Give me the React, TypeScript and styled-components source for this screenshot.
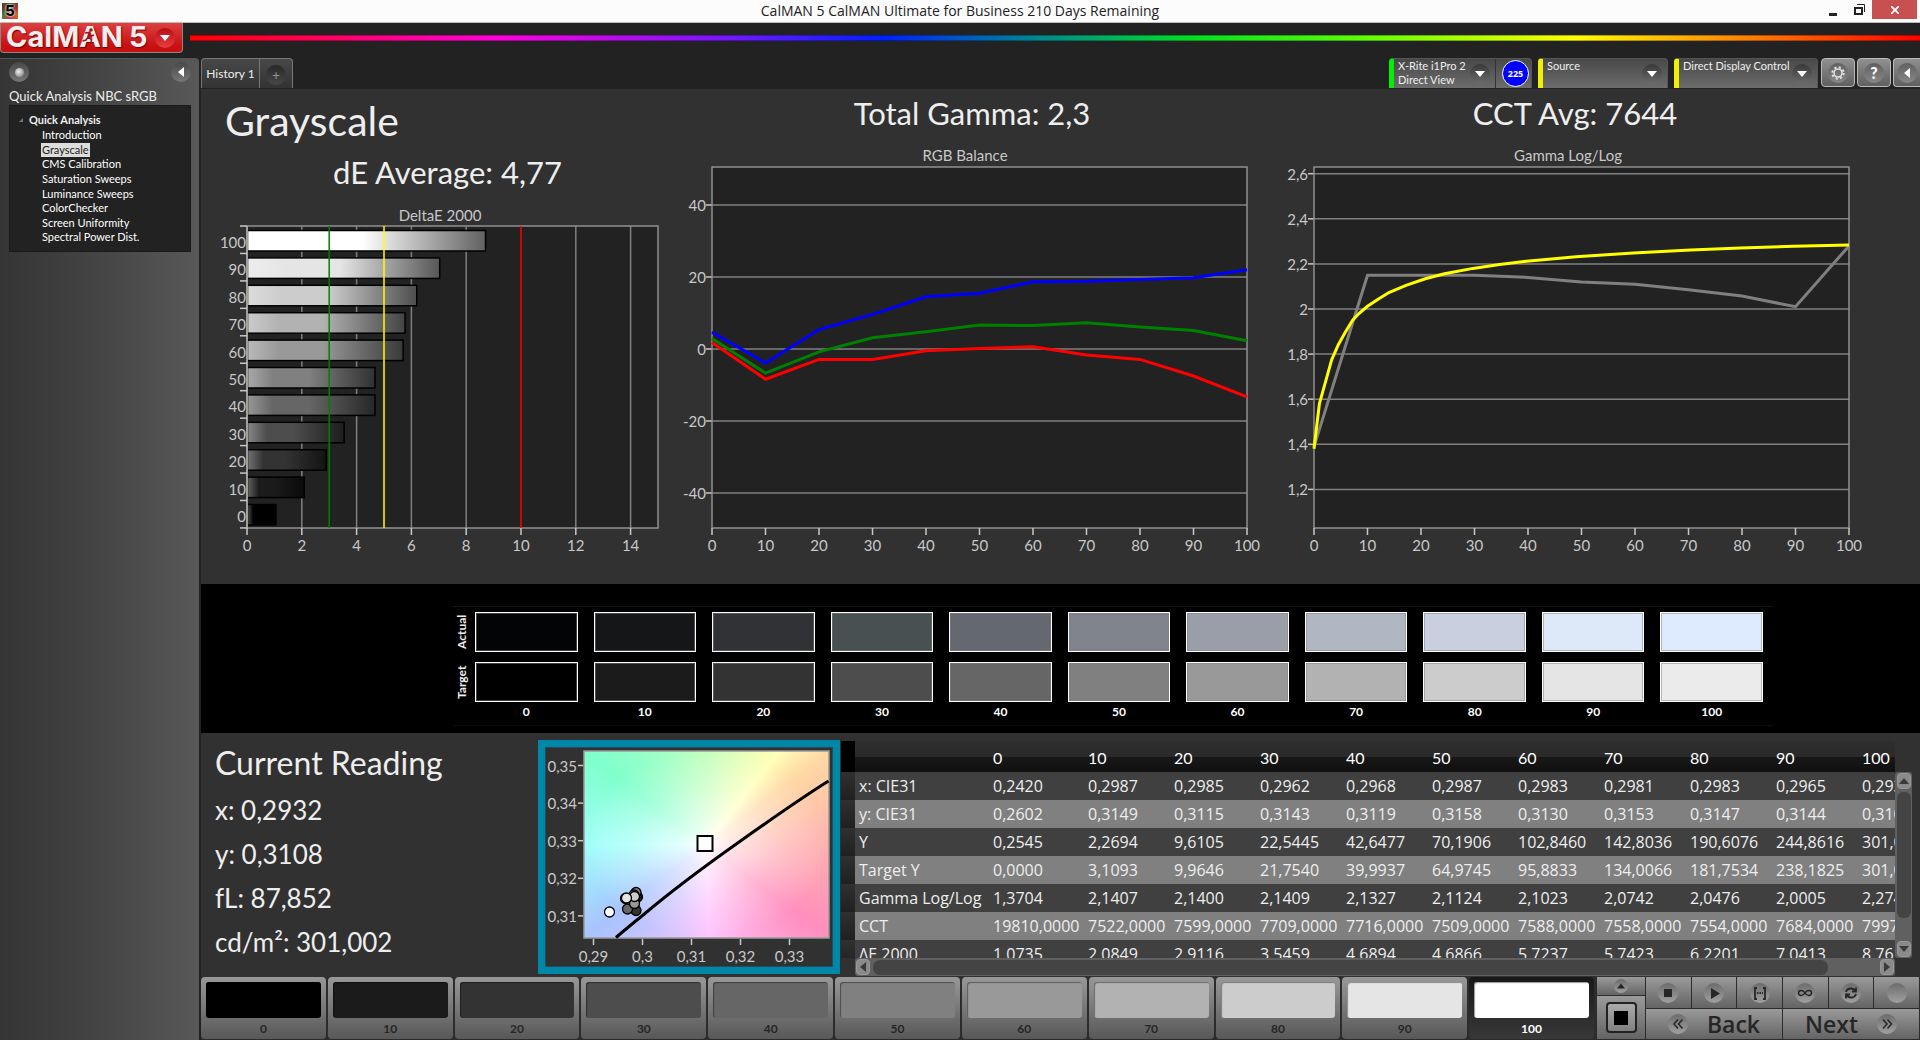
import React from "react";
import styled, { createGlobalStyle, css } from "styled-components";

const GlobalStyle = createGlobalStyle`
  *, *::before, *::after { box-sizing: border-box; }
  body { margin: 0; background: #222; font-family: Lato, "Open Sans", sans-serif; color: #eee; }
  button { font-family: inherit; color: inherit; border: 0; padding: 0; margin: 0; background: none; cursor: pointer; }
  h1, h2, h3, p, ul { margin: 0; padding: 0; font-weight: 400; }
  svg { display: block; }
`;

/* ---------- data ---------- */

const LEVELS = [0, 10, 20, 30, 40, 50, 60, 70, 80, 90, 100];
const ACTUAL = ["#020406", "#141618", "#313236", "#495052", "#646870", "#80848d", "#9a9ea9", "#b0b7c3", "#c9cfde", "#dde9f8", "#deebff"];
const TARGET = ["#000000", "#1b1b1b", "#333333", "#4d4d4d", "#666666", "#808080", "#999999", "#b2b2b2", "#cccccc", "#e5e5e5", "#ebebeb"];
const GRAYS = [0, 27, 51, 77, 102, 128, 153, 178, 204, 229, 255];
const DELTA_E = [1.04, 2.08, 2.88, 3.54, 4.67, 4.67, 5.7, 5.77, 6.2, 7.04, 8.72];

const RGB_SERIES = [
  { color: "#0000ff", values: [4.7, -3.9, 5.4, 9.6, 14.5, 15.5, 18.7, 18.8, 19.3, 19.8, 22] },
  { color: "#008000", values: [2.9, -6.7, -0.8, 3.1, 4.8, 6.7, 6.5, 7.3, 6.1, 5.1, 2.3] },
  { color: "#ff0000", values: [1.8, -8.4, -2.9, -2.9, -0.5, 0.1, 0.6, -1.7, -2.9, -7.5, -13.3] },
];
const GAMMA_MEASURED = [1.39, 2.15, 2.15, 2.15, 2.14, 2.12, 2.11, 2.085, 2.057, 2.01, 2.28];
const GAMMA_TARGET: [number, number][] = [
  [0, 1.38], [1, 1.58], [3.3, 1.775], [4.5, 1.84], [5.8, 1.895], [7.2, 1.95], [8.4, 1.98], [10, 2.012],
  [11.9, 2.042], [14, 2.073], [17.2, 2.105], [20.8, 2.134], [24.4, 2.156], [29.7, 2.18], [34.7, 2.198],
  [39.7, 2.212], [49, 2.232], [59.7, 2.248], [70.4, 2.262], [79.7, 2.27], [89.7, 2.278], [100, 2.284],
];

const TABLE: [string, string[]][] = [
  ["x: CIE31", ["0,2420", "0,2987", "0,2985", "0,2962", "0,2968", "0,2987", "0,2983", "0,2981", "0,2983", "0,2965", "0,2932"]],
  ["y: CIE31", ["0,2602", "0,3149", "0,3115", "0,3143", "0,3119", "0,3158", "0,3130", "0,3153", "0,3147", "0,3144", "0,3108"]],
  ["Y", ["0,2545", "2,2694", "9,6105", "22,5445", "42,6477", "70,1906", "102,8460", "142,8036", "190,6076", "244,8616", "301,0020"]],
  ["Target Y", ["0,0000", "3,1093", "9,9646", "21,7540", "39,9937", "64,9745", "95,8833", "134,0066", "181,7534", "238,1825", "301,0020"]],
  ["Gamma Log/Log", ["1,3704", "2,1407", "2,1400", "2,1409", "2,1327", "2,1124", "2,1023", "2,0742", "2,0476", "2,0005", "2,2740"]],
  ["CCT", ["19810,0000", "7522,0000", "7599,0000", "7709,0000", "7716,0000", "7509,0000", "7588,0000", "7558,0000", "7554,0000", "7684,0000", "7997,0000"]],
  ["ΔE 2000", ["1,0735", "2,0849", "2,9116", "3,5459", "4,6894", "4,6866", "5,7237", "5,7423", "6,2201", "7,0413", "8,7615"]],
];

/* ---------- window frame ---------- */

const Window = styled.div`
  display: flex;
  flex-direction: column;
  min-height: 100vh;
  overflow: hidden;
`;

const TitleBar = styled.header`
  display: grid;
  grid-template-columns: 1fr auto 1fr;
  align-items: center;
  height: 23px;
  background: #fcfcfc;
  border-bottom: 1px solid #bbb;
  color: #222;
  font: 14px/20px "Open Sans", sans-serif;
`;

const AppIcon = styled.span`
  width: 16px;
  height: 16px;
  margin-left: 2px;
  background: conic-gradient(#2c6a2c, #a03030, #d06a20, #d8304a, #40803a, #703028, #2c6a2c);
  color: #000;
  font: 800 15px/16px Inter, sans-serif;
  text-align: center;
  text-shadow: 0 0 2px #fff, 0 0 2px #fff;
`;

const WindowButtons = styled.div`
  display: flex;
  justify-self: end;
  align-self: start;
  margin-right: 3px;
`;

const WindowButton = styled.button<{ $close?: boolean }>`
  display: grid;
  place-items: center;
  width: ${(p) => (p.$close ? 45 : 26)}px;
  height: 19px;
  background: ${(p) => (p.$close ? "#c75050" : "none")};
`;

const BrandBar = styled.div`
  display: flex;
  align-items: flex-start;
  gap: 7px;
  height: 35px;
  background: #222;
`;

const Logo = styled.button`
  position: relative;
  display: flex;
  align-items: center;
  gap: 6px;
  width: 183px;
  height: 30px;
  padding: 0 7px 2px 5px;
  background: linear-gradient(#dd4040, #c81010 80%);
  border: 1px solid #888;
  border-top: 0;
  border-radius: 0 0 4px 4px;
  color: #eee;
  font: 700 29px/28px Inter, sans-serif;
  text-shadow: 1px 1px 1px #700;
`;

const LogoArrow = styled.span`
  display: grid;
  place-items: center;
  width: 20px;
  height: 20px;
  margin: 2px 0 0 auto;
  border-radius: 50%;
  background: linear-gradient(#b80c18, #e84040);
`;

const Runner = styled.svg`
  position: absolute;
  left: 81px;
  top: 5px;
`;

const Spectrum = styled.div`
  flex: 1;
  height: 6px;
  margin-top: 12px;
  border: 1px solid rgba(0, 0, 0, 0.3);
  border-width: 1px 0;
  background: linear-gradient(90deg, #f00, #f0d 18%, #6a18ff 32%, #0020ff 40%, #008890 49%, #00e020 58%, #60ff00 68%, #ff0 80%, #f00);
`;

const Body = styled.div`
  display: grid;
  grid-template-columns: 199px minmax(0, 1fr);
  column-gap: 2px;
  flex: 1;
`;

/* ---------- sidebar ---------- */

const Sidebar = styled.aside`
  padding: 3px 8px 0 9px;
  border-radius: 0 4px 0 0;
  background: linear-gradient(90deg, #353535, #414141 40%, #585858);
  border-top: 1px solid #555;
`;

const SidebarTop = styled.div`
  display: flex;
  justify-content: space-between;
`;

const RoundButton = styled.button`
  display: grid;
  place-items: center;
  width: 20px;
  height: 20px;
  border-radius: 50%;
  background: linear-gradient(#484848, #777);
`;

const Pearl = styled.span`
  width: 9px;
  height: 9px;
  border-radius: 50%;
  background: radial-gradient(circle at 40% 40%, #eee, #888 80%);
`;

const SidebarTitle = styled.h2`
  margin: 5px 0 0;
  font-size: 13px;
  line-height: 18px;
  white-space: nowrap;
`;

const Tree = styled.nav`
  height: 147px;
  padding: 6px 0 0 9px;
  background: #222;
  border: 1px solid #1a1a1a;
`;

const TreeRoot = styled.div`
  display: flex;
  align-items: center;
  gap: 6px;
  height: 15px;
  font-weight: 700;
  font-size: 11px;
`;

const TreeList = styled.ul`
  display: grid;
  grid-template-rows: repeat(8, minmax(0, 1fr));
  height: 117px;
  padding-left: 22px;
  margin-top: 1px;
  list-style: none;
  font-size: 11px;
  line-height: 14px;
`;

const TreeLink = styled.a<{ $on: boolean }>`
  display: block;
  width: fit-content;
  padding: 0 1px;
  color: ${(p) => (p.$on ? "#222" : "#fff")};
  background: ${(p) => (p.$on ? "#ddd" : "none")};
  text-decoration: none;
`;

/* ---------- tabs and device bar ---------- */

const Main = styled.main`
  display: flex;
  flex-direction: column;
  min-width: 0;
`;

const TopRow = styled.div`
  display: flex;
  justify-content: space-between;
  height: 31px;
  background: #222;
`;

const Tabs = styled.div`
  display: flex;
  height: 30px;
  border: 1px solid #777;
  border-bottom: 0;
  border-radius: 4px 4px 0 0;
  background: linear-gradient(#484848, #333);
`;

const Tab = styled.button`
  display: grid;
  place-items: center;
  width: 57px;
  font-size: 12px;
  line-height: 28px;
  white-space: nowrap;
`;

const AddTab = styled.button`
  display: grid;
  place-items: center;
  width: 33px;
  border-left: 1px solid #777;
`;

const AddDot = styled.span`
  width: 20px;
  height: 20px;
  border-radius: 50%;
  background: linear-gradient(#282828, #484848);
  color: #999;
  font-size: 13px;
  line-height: 20px;
  margin-top: 3px;
`;

const Devices = styled.div`
  display: flex;
  gap: 6px;
`;

const Device = styled.div<{ $w: number; $c: string }>`
  display: flex;
  align-items: stretch;
  width: ${(p) => p.$w}px;
  height: 30px;
  border: 1px solid #555;
  border-bottom: 0;
  border-left: 5px solid ${(p) => p.$c};
  border-radius: 4px 4px 0 0;
  background: linear-gradient(#484848, #6c6c6c);
`;

const DeviceButton = styled.button`
  flex: 1;
  display: flex;
  justify-content: space-between;
  padding: 0 5px 0 4px;
  text-align: left;
  font-size: 11px;
  line-height: 14px;
  white-space: nowrap;
`;

const ArrowDot = styled.span`
  display: grid;
  place-items: center;
  width: 20px;
  height: 20px;
  margin-top: 5px;
  border-radius: 50%;
  background: linear-gradient(#383838, #6c6c6c);
`;

const BadgeCell = styled.span`
  display: grid;
  place-items: center;
  width: 36px;
  padding: 0 0 1px 4px;
  border-left: 1px solid #333;
`;

const Badge = styled.span`
  width: 27px;
  height: 27px;
  border: 1px solid #fff;
  border-radius: 50%;
  background: #00f;
  color: #fff;
  font: 700 9px/25px "Open Sans", sans-serif;
  text-align: center;
`;

const ToolButtons = styled.div`
  display: flex;
  gap: 2px;
  margin-left: -3px;
`;

const ToolButton = styled.button<{ $edge?: boolean }>`
  display: grid;
  place-items: center;
  width: ${(p) => (p.$edge ? 27 : 34)}px;
  height: 29px;
  border: 1px solid #bbb;
  border-right-width: ${(p) => (p.$edge ? 0 : 1)}px;
  border-radius: ${(p) => (p.$edge ? "4px 0 0 4px" : "4px")};
  background: linear-gradient(#909090, #606060);
`;

const ToolDot = styled.span`
  display: grid;
  place-items: center;
  width: 20px;
  height: 20px;
  border-radius: 50%;
  background: linear-gradient(#606060, #888);
  color: #fff;
  font-weight: 900;
  font-size: 16px;
  line-height: 20px;
`;

/* ---------- charts ---------- */

const Charts = styled.section`
  display: grid;
  grid-template-columns: 469fr 600fr 650fr;
  padding: 4px 0 20px;
  background: #313131;
`;

const Panel = styled.div`
  display: flex;
  flex-direction: column;
  min-width: 0;
`;

const PageTitle = styled.h1`
  padding-left: 24px;
  margin-bottom: 3px;
  font-size: 41px;
  line-height: 56px;
`;

const Stat = styled.h2<{ $left?: number; $right?: number }>`
  padding: 0 ${(p) => p.$right ?? 0}px 0 ${(p) => p.$left ?? 0}px;
  margin-bottom: 7px;
  font-size: 31px;
  line-height: 40px;
  text-align: center;
`;

const ChartSvg = styled.svg`
  width: 100%;
  height: auto;
  margin-top: auto;
  font-family: Lato, sans-serif;
  font-size: 15px;
  fill: #c8c8c8;
`;

const points = (list: [number, number][]) => list.map((p) => p.map((n) => n.toFixed(1)).join(",")).join(" ");

const barShade = (v: number, k: number) => {
  const n = Math.round(k > 0 ? v + (255 - v) * k : v * (1 + k));
  return `rgb(${n},${n},${n})`;
};

function DeltaChart() {
  const x = (v: number) => 46 + v * 27.4;
  return (
    <ChartSvg viewBox="0 0 469 364" role="img" aria-label="DeltaE 2000">
      <defs>
        {GRAYS.map((g, i) => (
          <linearGradient key={i} id={`bar${i}`}>
            <stop offset="0" stopColor={barShade(g, 0.32)} />
            <stop offset="0.2" stopColor={barShade(g, 0)} />
            <stop offset="0.48" stopColor={barShade(g, 0)} />
            <stop offset="1" stopColor={barShade(g, -0.62)} />
          </linearGradient>
        ))}
      </defs>
      <text x="239" y="21" textAnchor="middle">DeltaE 2000</text>
      <rect x="46" y="26" width="411" height="302" fill="#222" />
      {[2, 4, 6, 8, 12, 14].map((v) => (
        <path key={v} d={`M${x(v)} 26V328`} stroke="#808080" strokeWidth="1.5" />
      ))}
      <rect x="46" y="26" width="411" height="302" fill="none" stroke="#909090" strokeWidth="1.5" />
      {DELTA_E.map((v, i) => (
        <rect key={i} x="46.5" y={30.5 + (10 - i) * 27.4} width={v * 27.3} height="20.5" fill={`url(#bar${i})`} stroke="#000" strokeWidth="1.5" />
      ))}
      <path d="M46 26V328" stroke="#a0a0a0" strokeWidth="2" />
      <path d={`M${x(3)} 26V328`} stroke="#008000" strokeWidth="1.5" />
      <path d={`M${x(5)} 26V328`} stroke="#ff0" strokeWidth="1.5" />
      <path d={`M${x(10)} 26V328`} stroke="#f00" strokeWidth="1.5" />
      {Array.from({ length: 12 }, (_, i) => (
        <path key={i} d={`M39 ${26 + i * 27.45}H46`} stroke="#c8c8c8" strokeWidth="1.5" />
      ))}
      {LEVELS.map((v, i) => (
        <text key={v} x="45" y={48 + (10 - i) * 27.4} textAnchor="end">{v}</text>
      ))}
      {[0, 2, 4, 6, 8, 10, 12, 14].map((v) => (
        <React.Fragment key={v}>
          <path d={`M${x(v)} 328V335`} stroke="#c8c8c8" strokeWidth="1.5" />
          <text x={x(v)} y="351" textAnchor="middle">{v}</text>
        </React.Fragment>
      ))}
    </ChartSvg>
  );
}

type LineChartProps = {
  title: string;
  width: number;
  left: number;
  titleX: number;
  ticks: number[];
  yOf: (v: number) => number;
  children: (x: (v: number) => number) => React.ReactNode;
};

function LineChart({ title, width, left, titleX, ticks, yOf, children }: LineChartProps) {
  const x = (v: number) => left + v * 5.35;
  return (
    <ChartSvg viewBox={`0 0 ${width} 424`} role="img" aria-label={title}>
      <text x={titleX} y="21" textAnchor="middle">{title}</text>
      <rect x={left} y="27" width="535" height="361" fill="#222" />
      {ticks.map((t) => (
        <React.Fragment key={t}>
          <path d={`M${left} ${yOf(t)}H${left + 535}`} stroke="#808080" strokeWidth="1.5" />
          <path d={`M${left - 6} ${yOf(t)}H${left}`} stroke="#c8c8c8" strokeWidth="1.5" />
          <text x={left - 6} y={yOf(t) + 6} textAnchor="end">{String(t).replace(".", ",")}</text>
        </React.Fragment>
      ))}
      <rect x={left} y="27" width="535" height="361" fill="none" stroke="#909090" strokeWidth="1.5" />
      {LEVELS.map((v) => (
        <React.Fragment key={v}>
          <path d={`M${x(v)} 388V395`} stroke="#c8c8c8" strokeWidth="1.5" />
          <text x={x(v)} y="411" textAnchor="middle">{v}</text>
        </React.Fragment>
      ))}
      {children(x)}
    </ChartSvg>
  );
}

const balanceY = (v: number) => 209 - v * 3.6;
const gammaY = (v: number) => 169 - (v - 2) * 225.5;

/* ---------- swatches ---------- */

const SwatchBand = styled.section`
  background: #000;
  padding: 22px 147px 7px 252px;
`;

const SwatchGrid = styled.div`
  display: grid;
  grid-template-columns: 6px repeat(11, 1fr);
  column-gap: 16px;
  row-gap: 10px;
  height: 120px;
  padding: 5px 10px 0 0;
  grid-template-rows: 40px 40px 14px;
  border-top: 1px solid #161616;
  border-bottom: 1px solid #0c0c0c;
`;

const SwatchLabel = styled.span`
  justify-self: start;
  writing-mode: vertical-rl;
  rotate: 180deg;
  width: 18px;
  font-size: 12px;
  line-height: 18px;
  text-align: center;
  font-weight: 700;
`;

const Swatch = styled.span`
  border: 1px solid #fff;
  box-shadow: inset 0 0 0 1px rgba(128, 128, 128, 0.5);
`;

const SwatchValue = styled.span`
  margin-top: -7px;
  font-size: 12px;
  line-height: 14px;
  font-weight: 700;
  color: #fff;
  text-align: center;
`;

/* ---------- readings ---------- */

const Lower = styled.section`
  display: grid;
  grid-template-columns: 337px 302px minmax(0, 1fr);
  flex: 1;
  padding: 7px 8px 0 0;
  background: #313131;
`;

const Reading = styled.div`
  padding-left: 14px;
`;

const ReadingTitle = styled.h2`
  margin-bottom: 2px;
  font-size: 32px;
  line-height: 46px;
`;

const ReadingLine = styled.p`
  font-size: 26px;
  line-height: 44px;
`;

const CieFrame = styled.div`
  height: 234px;
  border: 7px solid #0087a8;
  box-shadow: inset 0 0 0 1px #205060;
`;

const CieSvg = styled.svg`
  font-family: Lato, sans-serif;
  font-size: 15px;
  fill: #c8c8c8;
`;

const CieField = styled.div`
  width: 100%;
  height: 100%;
  background:
    radial-gradient(closest-side, #fff, rgba(255, 255, 255, 0.7) 20%, rgba(255, 255, 255, 0.3) 60%, rgba(255, 255, 255, 0)),
    conic-gradient(#c4ffc0, #ffffb8 38deg, #ffd8a4 53deg, #ffb0ae 90deg, #ff8fbe 127deg, #ffc4ff 178deg, #a8c4ff 233deg, #a0fffa 270deg, #80ffcc 307deg, #c4ffc0);
`;

function CieChart() {
  const px = (v: number) => 48.5 + (v - 0.29) * 4900;
  const py = (v: number) => 18.5 + (0.35 - v) * 3760;
  return (
    <CieSvg width="288" height="220" viewBox="0 0 288 220" role="img" aria-label="CIE xy chart">
      <foreignObject x="39" y="4" width="245" height="187"><CieField /></foreignObject>
      <rect x="39" y="4" width="245" height="187" fill="none" stroke="#999" strokeWidth="1.5" />
      <path d="M71 190.5Q82 181 97.5 168.5C130 141 160 119 195.5 94C225 73 255 52 283.5 34" fill="none" stroke="#000" strokeWidth="3" />
      {[0.35, 0.34, 0.33, 0.32, 0.31].map((v) => (
        <React.Fragment key={v}>
          <path d={`M33 ${py(v)}H38`} stroke="#c8c8c8" strokeWidth="1.5" />
          <text x="32" y={py(v) + 6} textAnchor="end">{String(v).replace(".", ",")}</text>
        </React.Fragment>
      ))}
      {[0.29, 0.3, 0.31, 0.32, 0.33].map((v) => (
        <React.Fragment key={v}>
          <path d={`M${px(v)} 192V198`} stroke="#c8c8c8" strokeWidth="1.5" />
          <text x={px(v)} y="215" textAnchor="middle">{String(v).replace(".", ",")}</text>
        </React.Fragment>
      ))}
      <rect x="152.5" y="89" width="15" height="15" fill="#fff" stroke="#000" strokeWidth="2" />
      <g stroke="#000" strokeWidth="1.3">
        <circle cx="92.5" cy="150" r="5" fill="#1b1b1b" />
        <circle cx="91" cy="163.5" r="5" fill="#333" />
        <circle cx="80.5" cy="151.5" r="5" fill="#4d4d4d" />
        <circle cx="82.5" cy="162" r="5" fill="#666" />
        <circle cx="91" cy="145.5" r="5" fill="#808080" />
        <circle cx="89.5" cy="156.5" r="5" fill="#999" />
        <circle cx="89" cy="148" r="5" fill="#b2b2b2" />
        <circle cx="89.5" cy="149.5" r="5" fill="#ccc" />
        <circle cx="81.5" cy="151" r="5" fill="#e5e5e5" />
        <circle cx="64.5" cy="165" r="5" fill="#fff" />
      </g>
    </CieSvg>
  );
}

const DataGrid = styled.div`
  display: grid;
  grid-template-columns: minmax(0, 1fr) 17px;
  grid-template-rows: 217px 18px;
  height: 235px;
  margin-top: 1px;
  padding-left: 1px;
`;

const TableClip = styled.div`
  overflow: hidden;
`;

const Table = styled.table`
  table-layout: fixed;
  width: 1103px;
  border-collapse: collapse;
  font: 16px/28px "Open Sans", sans-serif;
  text-align: left;

  th, td { padding: 0 0 0 4px; font-weight: 400; white-space: nowrap; height: 28px; }
  thead th { height: 31px; font: 400 16px/29px Lato, sans-serif; color: #fff; padding-top: 2px; }
  thead tr { background: linear-gradient(#2e2e2e, #2a2a2a 50%, #181818 50%, #101010); }
  tbody tr { background: #404040; }
  tbody tr:nth-child(even) { background: #808080; }
  tbody td:first-child { background: linear-gradient(#303030, #202020); }
  thead td { background: #000; }
`;

const scrollBase = css`
  display: flex;
  align-items: center;
  background: #606060;
`;

const VScroll = styled.div`
  ${scrollBase}
  flex-direction: column;
  margin-top: 31px;
  padding: 1px;
  border-radius: 3px;
`;

const HScroll = styled.div`
  ${scrollBase}
  margin-left: 14px;
  padding: 1px;
  border-radius: 3px;
`;

const ScrollButton = styled.button`
  display: grid;
  place-items: center;
  width: 14px;
  height: 16px;
  border-radius: 4px;
  background: #8a8a8a;
  border: 1px solid #999;
`;

const VThumb = styled.span`
  width: 14px;
  height: 126px;
  margin: 3px 0 auto;
  border-radius: 6px;
  background: #444;
`;

const HThumb = styled.span`
  flex: 0 1 92%;
  height: 15px;
  margin: 0 auto 0 3px;
  border-radius: 7px;
  background: #444;
`;

/* ---------- footer ---------- */

const Footer = styled.footer`
  display: grid;
  grid-template-columns: minmax(0, 1fr) 48px 273px;
  column-gap: 1px;
  height: 63px;
  padding: 0 1px 1px 0;
  background: #2c2c2c;
`;

const Patches = styled.div`
  display: flex;
  gap: 2px;
  padding-right: 2px;
`;

const Patch = styled.button<{ $on: boolean }>`
  flex: 1;
  display: flex;
  flex-direction: column;
  padding: 5px 5px 0;
  border-radius: 4px;
  background: ${(p) => (p.$on ? "linear-gradient(#181818, #383838)" : "linear-gradient(#989898, #585858)")};
  color: ${(p) => (p.$on ? "#fff" : "#262626")};
  font-size: 12px;
  font-weight: 700;
  line-height: 21px;
`;

const PatchColor = styled.span`
  align-self: stretch;
  height: 36px;
  border-radius: 3px;
  box-shadow: inset 1px 1px 1px rgba(0, 0, 0, 0.4);
`;

const PatchLabel = styled.span`
  align-self: stretch;
  text-align: center;
`;

const StopColumn = styled.div`
  display: grid;
  grid-template-rows: 18px 43px;
  row-gap: 1px;
`;

const MetalButton = styled.button`
  display: flex;
  align-items: center;
  justify-content: center;
  gap: 19px;
  background: linear-gradient(#9a9a9a, #646464);
  color: #262626;
  font: 600 23px/28px "Open Sans", sans-serif;
`;

const StopBox = styled.span`
  display: grid;
  place-items: center;
  width: 31px;
  height: 31px;
  border: 2px solid #222;
  border-radius: 4px;
  background: linear-gradient(#aaa, #808080);
`;

const StopCore = styled.span`
  width: 14px;
  height: 14px;
  background: #000;
`;

const Transport = styled.div`
  display: grid;
  grid-template-columns: repeat(12, 1fr);
  grid-template-rows: 31px 30px;
  gap: 1px;

  button { grid-column: span 2; }
  button:nth-last-child(-n + 2) { grid-column: span 6; }
`;

const MetalDot = styled.span<{ $small?: boolean }>`
  display: grid;
  place-items: center;
  width: ${(p) => (p.$small ? 14 : 20)}px;
  height: ${(p) => (p.$small ? 14 : 20)}px;
  border-radius: 50%;
  background: linear-gradient(#6c6c6c, #a0a0a0);
`;

type TriProps = { dir: "up" | "down" | "left" | "right"; size?: number; color?: string };
const TRI = { up: "M0 8L5 2L10 8Z", down: "M0 2H10L5 8Z", left: "M8 0V10L2 5Z", right: "M2 0V10L8 5Z" };
const Tri = ({ dir, size = 10, color = "#fff" }: TriProps) => (
  <svg width={size} height={size} viewBox="0 0 10 10" aria-hidden="true"><path d={TRI[dir]} fill={color} /></svg>
);

const Glyph = ({ children }: { children: React.ReactNode }) => (
  <svg width="16" height="16" viewBox="0 0 16 16" fill="none" stroke="#262626" strokeWidth="1.8" aria-hidden="true">{children}</svg>
);

const MENU = ["Introduction", "Grayscale", "CMS Calibration", "Saturation Sweeps", "Luminance Sweeps", "ColorChecker", "Screen Uniformity", "Spectral Power Dist."];

export default function App() {
  const [page, setPage] = React.useState("Grayscale");
  const [level, setLevel] = React.useState(100);

  return (
    <Window>
      <GlobalStyle />
      <TitleBar>
        <AppIcon>5</AppIcon>
        <span>CalMAN 5 CalMAN Ultimate for Business 210 Days Remaining</span>
        <WindowButtons>
          <WindowButton aria-label="Minimize">
            <svg width="8" height="14"><path d="M0 10H8V13H0Z" fill="#222" /></svg>
          </WindowButton>
          <WindowButton aria-label="Restore">
            <svg width="11" height="11" fill="none" stroke="#222"><path d="M1 4H8V10H1Z" strokeWidth="2" /><path d="M3 .5H10.5V8" /></svg>
          </WindowButton>
          <WindowButton $close aria-label="Close">
            <svg width="8" height="8" stroke="#fff" strokeWidth="1.8"><path d="M0 0L8 8M8 0L0 8" /></svg>
          </WindowButton>
        </WindowButtons>
      </TitleBar>

      <BrandBar>
        <Logo aria-label="CalMAN 5 menu">
          <span>CalMAN</span>
          <span>5</span>
          <Runner width="14" height="17" viewBox="0 0 14 17" fill="none" stroke="#a01818" strokeWidth="1.6" aria-hidden="true">
            <circle cx="9" cy="2" r="1" fill="#a01818" />
            <path d="M3 5L7 4.5L6 9L9.5 11.5L9 15M6 9L4 12L0.5 13M7 5L9.5 8L12 7" />
          </Runner>
          <LogoArrow><Tri dir="down" /></LogoArrow>
        </Logo>
        <Spectrum />
      </BrandBar>

      <Body>
        <Sidebar>
          <SidebarTop>
            <RoundButton aria-label="Pin"><Pearl /></RoundButton>
            <RoundButton aria-label="Collapse"><Tri dir="left" /></RoundButton>
          </SidebarTop>
          <SidebarTitle>Quick Analysis NBC sRGB</SidebarTitle>
          <Tree aria-label="Workflow">
            <TreeRoot>
              <svg width="4" height="4" aria-hidden="true"><path d="M4 0V4H0Z" fill="#777" /></svg>
              Quick Analysis
            </TreeRoot>
            <TreeList>
              {MENU.map((m) => (
                <li key={m}>
                  <TreeLink href="#" $on={m === page} onClick={() => setPage(m)}>{m}</TreeLink>
                </li>
              ))}
            </TreeList>
          </Tree>
        </Sidebar>

        <Main>
          <TopRow>
            <Tabs>
              <Tab>History 1</Tab>
              <AddTab aria-label="Add tab"><AddDot>+</AddDot></AddTab>
            </Tabs>
            <Devices>
              <Device $w={143} $c="#00f000">
                <DeviceButton aria-haspopup="menu">
                  <span>X-Rite i1Pro 2<br />Direct View</span>
                  <ArrowDot><Tri dir="down" /></ArrowDot>
                </DeviceButton>
                <BadgeCell><Badge>225</Badge></BadgeCell>
              </Device>
              <Device $w={130} $c="#f0f000">
                <DeviceButton aria-haspopup="menu"><span>Source</span><ArrowDot><Tri dir="down" /></ArrowDot></DeviceButton>
              </Device>
              <Device $w={144} $c="#f0f000">
                <DeviceButton aria-haspopup="menu"><span>Direct Display Control</span><ArrowDot><Tri dir="down" /></ArrowDot></DeviceButton>
              </Device>
              <ToolButtons>
                <ToolButton aria-label="Settings">
                  <ToolDot>
                    <svg width="14" height="14" viewBox="0 0 14 14" fill="none" stroke="#e0e0e0" aria-hidden="true">
                      <circle cx="7" cy="7" r="4" strokeWidth="1.6" />
                      <circle cx="7" cy="7" r="5.7" strokeWidth="2" strokeDasharray="2.2 2.28" />
                    </svg>
                  </ToolDot>
                </ToolButton>
                <ToolButton aria-label="Help"><ToolDot>?</ToolDot></ToolButton>
                <ToolButton $edge aria-label="Collapse panel"><ToolDot><Tri dir="left" /></ToolDot></ToolButton>
              </ToolButtons>
            </Devices>
          </TopRow>

          <Charts>
            <Panel>
              <PageTitle>Grayscale</PageTitle>
              <Stat $left={24}>dE Average: 4,77</Stat>
              <DeltaChart />
            </Panel>
            <Panel>
              <Stat $left={4}>Total Gamma: 2,3</Stat>
              <LineChart title="RGB Balance" width={600} left={42} titleX={295} ticks={[40, 20, 0, -20, -40]} yOf={balanceY}>
                {(x) => RGB_SERIES.map((s) => (
                  <polyline key={s.color} points={points(s.values.map((v, i) => [x(i * 10), balanceY(v)]))} fill="none" stroke={s.color} strokeWidth="3" />
                ))}
              </LineChart>
            </Panel>
            <Panel>
              <Stat $right={40}>CCT Avg: 7644</Stat>
              <LineChart title="Gamma Log/Log" width={650} left={44} titleX={298} ticks={[2.6, 2.4, 2.2, 2, 1.8, 1.6, 1.4, 1.2]} yOf={gammaY}>
                {(x) => (
                  <>
                    <polyline points={points(GAMMA_MEASURED.map((v, i) => [x(i * 10), gammaY(v)]))} fill="none" stroke="#808080" strokeWidth="3" />
                    <polyline points={points(GAMMA_TARGET.map(([a, b]) => [x(a), gammaY(b)]))} fill="none" stroke="#ff0" strokeWidth="3" />
                  </>
                )}
              </LineChart>
            </Panel>
          </Charts>

          <SwatchBand>
            <SwatchGrid>
              <SwatchLabel>Actual</SwatchLabel>
              {ACTUAL.map((c, i) => <Swatch key={i} style={{ background: c }} />)}
              <SwatchLabel>Target</SwatchLabel>
              {TARGET.map((c, i) => <Swatch key={i} style={{ background: c }} />)}
              <span />
              {LEVELS.map((l) => <SwatchValue key={l}>{l}</SwatchValue>)}
            </SwatchGrid>
          </SwatchBand>

          <Lower>
            <Reading>
              <ReadingTitle>Current Reading</ReadingTitle>
              <ReadingLine>x: 0,2932</ReadingLine>
              <ReadingLine>y: 0,3108</ReadingLine>
              <ReadingLine>fL: 87,852</ReadingLine>
              <ReadingLine>cd/m²: 301,002</ReadingLine>
            </Reading>
            <CieFrame><CieChart /></CieFrame>
            <DataGrid>
              <TableClip>
                <Table>
                  <colgroup>
                    <col width={14} /><col width={134} /><col width={95} />
                    {LEVELS.slice(1).map((l) => <col key={l} width={86} />)}
                  </colgroup>
                  <thead>
                    <tr><td /><th />{LEVELS.map((l) => <th key={l} scope="col">{l}</th>)}</tr>
                  </thead>
                  <tbody>
                    {TABLE.map(([name, cells]) => (
                      <tr key={name}>
                        <td />
                        <th scope="row">{name}</th>
                        {cells.map((c, i) => <td key={i}>{c}</td>)}
                      </tr>
                    ))}
                  </tbody>
                </Table>
              </TableClip>
              <VScroll>
                <ScrollButton aria-label="Scroll up"><Tri dir="up" color="#3a3a3a" /></ScrollButton>
                <VThumb />
                <ScrollButton aria-label="Scroll down"><Tri dir="down" color="#3a3a3a" /></ScrollButton>
              </VScroll>
              <HScroll>
                <ScrollButton aria-label="Scroll left"><Tri dir="left" color="#3a3a3a" /></ScrollButton>
                <HThumb />
                <ScrollButton aria-label="Scroll right"><Tri dir="right" color="#3a3a3a" /></ScrollButton>
              </HScroll>
            </DataGrid>
          </Lower>

          <Footer>
            <Patches>
              {LEVELS.map((l, i) => (
                <Patch key={l} $on={l === level} onClick={() => setLevel(l)}>
                  <PatchColor style={{ background: i === 10 ? "#fff" : TARGET[i] }} />
                  <PatchLabel>{l}</PatchLabel>
                </Patch>
              ))}
            </Patches>
            <StopColumn>
              <MetalButton aria-label="Expand"><MetalDot $small><Tri dir="up" size={8} color="#262626" /></MetalDot></MetalButton>
              <MetalButton aria-label="Stop"><StopBox><StopCore /></StopBox></MetalButton>
            </StopColumn>
            <Transport>
              <MetalButton aria-label="Stop reading"><MetalDot><Glyph><path d="M4 4H12V12H4Z" fill="#262626" stroke="none" /></Glyph></MetalDot></MetalButton>
              <MetalButton aria-label="Play"><MetalDot><Glyph><path d="M5 3V14L14 8.5Z" fill="#262626" stroke="none" /></Glyph></MetalDot></MetalButton>
              <MetalButton aria-label="Read series"><MetalDot><Glyph><path d="M5 3H3V14H5M11 3H13V14H11" /><path d="M5 8H11" strokeDasharray="1.5 1" /></Glyph></MetalDot></MetalButton>
              <MetalButton aria-label="Read continuous"><MetalDot><Glyph><path d="M8 8C6 4.5 1.5 5 1.5 8S6 11.5 8 8S14.5 5 14.5 8S10 11.5 8 8Z" strokeWidth="1.5" /></Glyph></MetalDot></MetalButton>
              <MetalButton aria-label="Refresh"><MetalDot><Glyph><path d="M3 7Q4 3.5 8 3.5Q11 3.5 12.5 6M13 2.5V6.5H9M13 9Q12 12.5 8 12.5Q5 12.5 3.5 10M3 13.5V9.5H7" /></Glyph></MetalDot></MetalButton>
              <MetalButton aria-label="Record"><MetalDot /></MetalButton>
              <MetalButton><MetalDot><Glyph><path d="M8 3.5L4 8L8 12.5M12.5 3.5L8.5 8L12.5 12.5" strokeWidth="1.5" /></Glyph></MetalDot>Back</MetalButton>
              <MetalButton>Next<MetalDot><Glyph><path d="M4 3.5L8 8L4 12.5M8.5 3.5L12.5 8L8.5 12.5" strokeWidth="1.5" /></Glyph></MetalDot></MetalButton>
            </Transport>
          </Footer>
        </Main>
      </Body>
    </Window>
  );
}
